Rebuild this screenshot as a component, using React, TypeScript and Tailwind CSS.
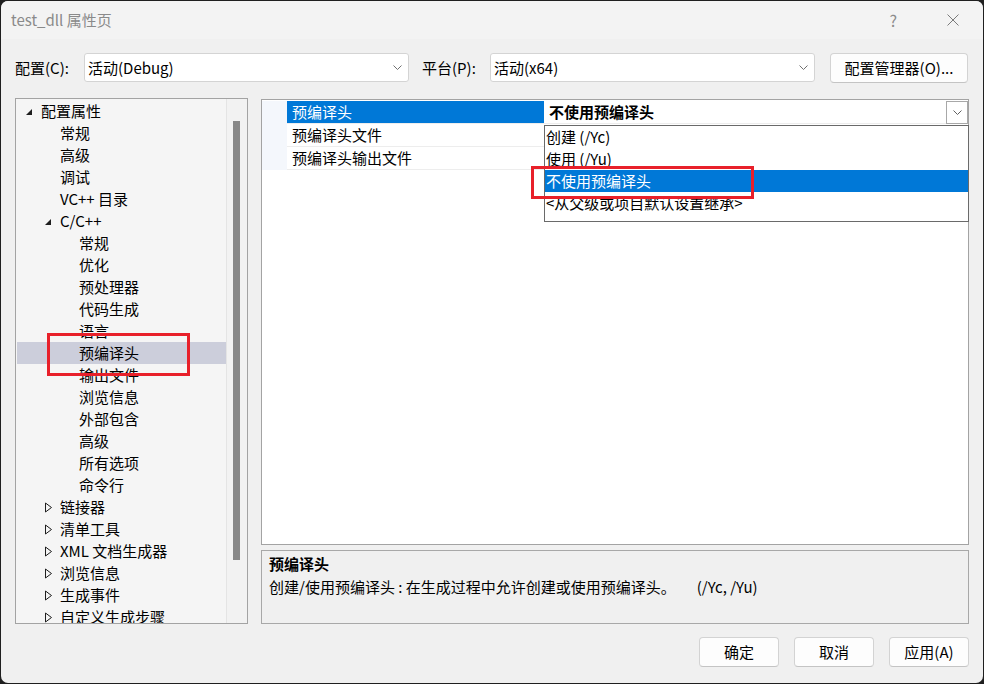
import React from 'react';

type Node = { t: string; lvl: number; icon?: 'exp' | 'col'; sel?: boolean };

const tree: Node[] = [
  { t: '配置属性', lvl: 0, icon: 'exp' },
  { t: '常规', lvl: 1 },
  { t: '高级', lvl: 1 },
  { t: '调试', lvl: 1 },
  { t: 'VC++ 目录', lvl: 1 },
  { t: 'C/C++', lvl: 1, icon: 'exp' },
  { t: '常规', lvl: 2 },
  { t: '优化', lvl: 2 },
  { t: '预处理器', lvl: 2 },
  { t: '代码生成', lvl: 2 },
  { t: '语言', lvl: 2 },
  { t: '预编译头', lvl: 2, sel: true },
  { t: '输出文件', lvl: 2 },
  { t: '浏览信息', lvl: 2 },
  { t: '外部包含', lvl: 2 },
  { t: '高级', lvl: 2 },
  { t: '所有选项', lvl: 2 },
  { t: '命令行', lvl: 2 },
  { t: '链接器', lvl: 1, icon: 'col' },
  { t: '清单工具', lvl: 1, icon: 'col' },
  { t: 'XML 文档生成器', lvl: 1, icon: 'col' },
  { t: '浏览信息', lvl: 1, icon: 'col' },
  { t: '生成事件', lvl: 1, icon: 'col' },
  { t: '自定义生成步骤', lvl: 1, icon: 'col' },
];

const padCls = ['pl-[8px]', 'pl-[27px]', 'pl-[46px]'];

function ExpTri() {
  return (
    <svg width="8" height="8" viewBox="0 0 8 8" className="mt-[2px]">
      <polygon points="7,1 7,7 1,7" fill="#1e1e1e" />
    </svg>
  );
}

function ColTri() {
  return (
    <svg width="9" height="11" viewBox="0 0 9 11" className="mt-[1px]">
      <polygon points="1.5,1 7.5,5.5 1.5,10" fill="none" stroke="#1e1e1e" strokeWidth="1" />
    </svg>
  );
}

function Chevron({ color = '#707070' }: { color?: string }) {
  return (
    <svg width="9" height="5" viewBox="0 0 9 5">
      <polyline points="0.5,0.5 4.5,4.5 8.5,0.5" fill="none" stroke={color} strokeWidth="1" />
    </svg>
  );
}

function Combo({ text }: { text: string }) {
  return (
    <div className="flex h-[29px] w-[325px] items-center justify-between rounded-[3px] border border-[#d4d4d4] bg-white pl-[3px] pr-[6px]">
      <span>{text}</span>
      <Chevron />
    </div>
  );
}

function Btn({ children, w }: { children: React.ReactNode; w: string }) {
  return (
    <div className={`flex h-[30px] ${w} items-center justify-center rounded-[4px] border border-[#d3d3d3] border-b-[#c4c4c4] bg-[#fdfdfd]`}>
      {children}
    </div>
  );
}

export default function App() {
  return (
    <div className="h-[684px] w-[984px] bg-[#1f1f1f] p-[1px] font-['Microsoft_YaHei_UI','Noto_Sans_CJK_SC',sans-serif] text-[15px] leading-[22px] text-black">
      <div className="relative flex h-[682px] w-[982px] flex-col overflow-hidden rounded-[7px] bg-[#f0f0f0]">
        {/* title bar */}
        <div className="flex h-[38px] items-center bg-[#f3f3f3] pl-[10px] text-[#8a8a8a]">
          <span className="flex-1">test_dll 属性页</span>
          <span className="mr-[50px] text-[16px]">?</span>
          <svg width="12" height="12" viewBox="0 0 12 12" className="mr-[24px]">
            <line x1="0.5" y1="0.5" x2="11.5" y2="11.5" stroke="#7a7a7a" strokeWidth="1" />
            <line x1="11.5" y1="0.5" x2="0.5" y2="11.5" stroke="#7a7a7a" strokeWidth="1" />
          </svg>
        </div>

        {/* config row */}
        <div className="mt-[13px] flex h-[31px] items-center pl-[14px]">
          <span className="w-[69px]">配置(C):</span>
          <Combo text="活动(Debug)" />
          <span className="ml-[13px] w-[68px]">平台(P):</span>
          <Combo text="活动(x64)" />
          <div className="ml-[15px] flex h-[30px] w-[138px] items-center justify-center rounded-[4px] border border-[#d3d3d3] border-b-[#c4c4c4] bg-[#fdfdfd]">
            配置管理器(O)...
          </div>
        </div>

        {/* main */}
        <div className="mt-[15px] flex h-[526px] pl-[14px]">
          {/* tree */}
          <div className="flex h-[526px] w-[233px] border border-[#a3a3a3] bg-[#f5f5f5]">
            <div className="w-[210px] overflow-hidden pl-[1px] pt-[1px]">
              {tree.map((n, i) => (
                <div
                  key={i}
                  className={`flex h-[22px] items-center whitespace-nowrap ${padCls[n.lvl]} ${n.sel ? 'bg-[#cccedb]' : ''}`}
                >
                  <span className="flex w-[16px] items-center">
                    {n.icon === 'exp' ? <ExpTri /> : n.icon === 'col' ? <ColTri /> : null}
                  </span>
                  <span>{n.t}</span>
                </div>
              ))}
            </div>
            <div className="w-[21px] border-l border-[#e4e4e4] bg-[#f2f2f2] pl-[6px] pt-[22px]">
              <div className="h-[439px] w-[7px] bg-[#888888]" />
            </div>
          </div>

          {/* right column */}
          <div className="ml-[13px] mt-[1px] flex w-[708px] flex-col">
            {/* property grid */}
            <div className="relative h-[447px] border border-[#a3a3a3] bg-white pt-[1px]">
              <div className="flex">
                <div className="w-[25px] self-stretch bg-[#f4f7fc]" />
                <div className="flex-1">
                  <div className="flex h-[23px] border-b border-[#ededed]">
                    <div className="w-[257px] bg-[#0078d7] pl-[5px] text-white">预编译头</div>
                    <div className="flex flex-1 items-center justify-between bg-white pl-[5px]">
                      <span className="font-bold">不使用预编译头</span>
                      <div className="flex h-[23px] w-[22px] items-center justify-center border border-[#a8a8a8] bg-white">
                        <Chevron color="#606060" />
                      </div>
                    </div>
                  </div>
                  <div className="flex h-[23px] border-b border-[#ededed]">
                    <div className="w-[257px] pl-[5px]">预编译头文件</div>
                    <div className="flex-1" />
                  </div>
                  <div className="flex h-[23px] border-b border-[#ededed]">
                    <div className="w-[257px] pl-[5px]">预编译头输出文件</div>
                    <div className="flex-1" />
                  </div>
                </div>
              </div>

              {/* dropdown list (overlay) */}
              <div className="absolute left-[282px] top-[25px] h-[97px] w-[425px] border border-[#6a6a6a] bg-white">
                <div className="h-[22px] pl-[1px]">创建 (/Yc)</div>
                <div className="h-[22px] pl-[1px]">使用 (/Yu)</div>
                <div className="h-[22px] bg-[#0078d7] pl-[1px] text-white">不使用预编译头</div>
                <div className="h-[22px] pl-[1px]">&lt;从父级或项目默认设置继承&gt;</div>
              </div>
            </div>

            {/* description */}
            <div className="mt-[5px] h-[74px] border border-[#a8a8a8] bg-[#f0f0f0] pl-[7px] pt-[2px]">
              <div className="font-bold">预编译头</div>
              <div className="mt-[1px] whitespace-nowrap">
                创建/使用预编译头 : 在生成过程中允许创建或使用预编译头。
                <span className="ml-[21px]">(/Yc, /Yu)</span>
              </div>
            </div>
          </div>
        </div>

        {/* buttons */}
        <div className="mt-[13px] flex justify-end gap-[15px] pr-[14px]">
          <Btn w="w-[80px]">确定</Btn>
          <Btn w="w-[80px]">取消</Btn>
          <Btn w="w-[80px]">应用(A)</Btn>
        </div>

        {/* red annotation boxes */}
        <div className="absolute left-[46px] top-[332px] h-[43px] w-[143px] border-[3px] border-[#e8202a]" />
        <div className="absolute left-[530px] top-[165px] h-[33px] w-[223px] border-[3px] border-[#e8202a]" />
      </div>
    </div>
  );
}
